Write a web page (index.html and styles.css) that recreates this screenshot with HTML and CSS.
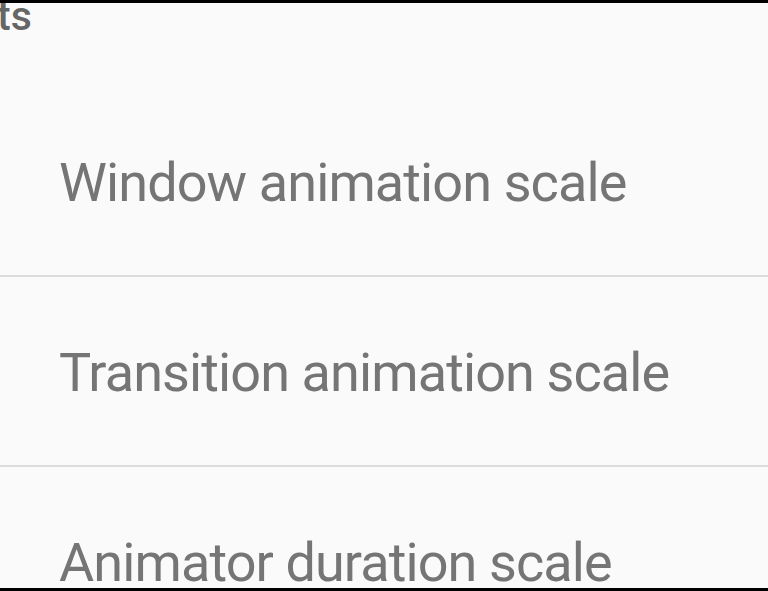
FILE: index.html
```html
<!DOCTYPE html>
<html lang="en">
<head>
    <meta charset="UTF-8">
    <meta name="viewport" content="width=device-width, initial-scale=1.0">
    <title>Developer options</title>
    <link rel="stylesheet" href="styles.css">
</head>
<body>
    <div class="screen">
        <div class="category">
            <span class="category-title">ts</span>
        </div>
        <div class="pref-list">
            <div class="pref">Window animation scale</div>
            <div class="pref">Transition animation scale</div>
            <div class="pref">Animator duration scale</div>
        </div>
    </div>
</body>
</html>
```
FILE: styles.css
```css
html, body {
    margin: 0;
    padding: 0;
}
body {
    background-color: #000;
    font-family: Roboto, "Noto Sans", sans-serif;
}
.screen {
    height: 591px;
    box-sizing: border-box;
    border-top: 3px solid #000;
    border-bottom: 3px solid #000;
    background-color: #fafafa;
    overflow: hidden;
}
.category {
    height: 84px;
    overflow: hidden;
}
.category-title {
    display: block;
    margin-top: -9px;
    margin-left: -3px;
    font-size: 41px;
    line-height: 44px;
    font-weight: 500;
    color: #666;
}
.pref {
    height: 190px;
    display: flex;
    align-items: center;
    padding-left: 59px;
    padding-top: 3px;
    box-sizing: border-box;
    border-bottom: 2px solid #dcdcdc;
    font-size: 54px;
    letter-spacing: -0.9px;
    color: #757575;
}
```
